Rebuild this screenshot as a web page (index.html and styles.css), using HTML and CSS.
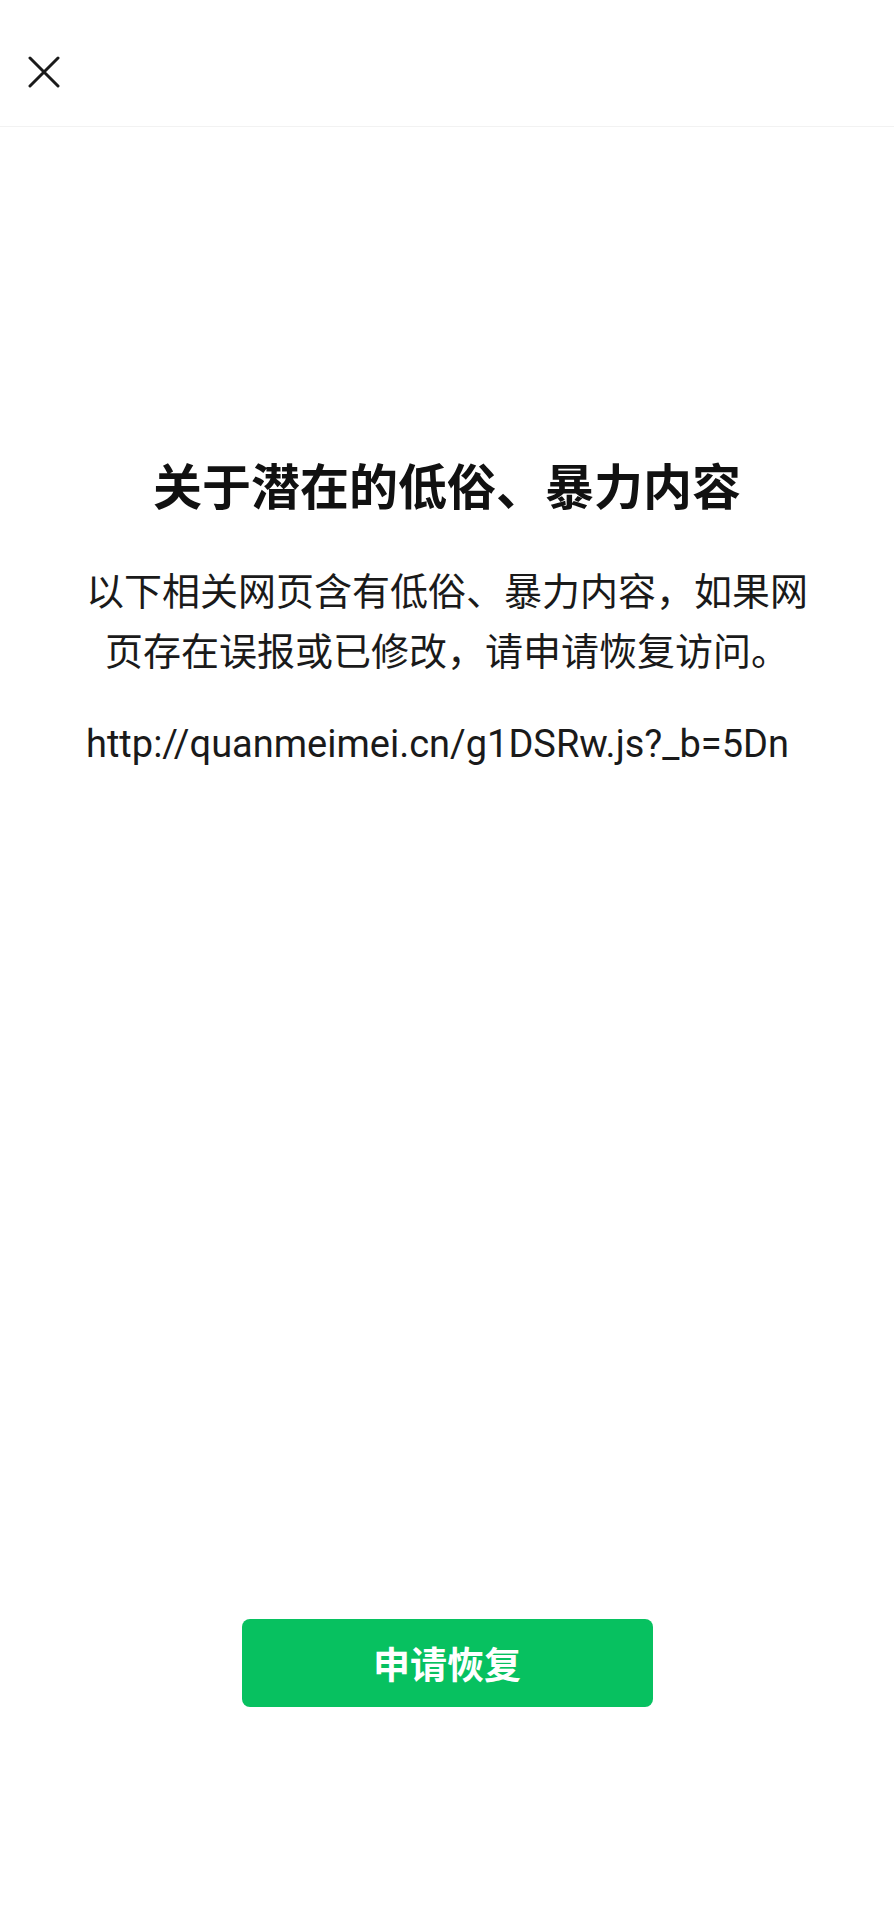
FILE: index.html
```html
<!DOCTYPE html>
<html lang="zh-CN">
<head>
  <meta charset="utf-8">
  <title>关于潜在的低俗、暴力内容</title>
  <link rel="stylesheet" href="styles.css">
</head>
<body>
<div class="page">
  <div class="top-bar">
    <button class="close-btn" aria-label="关闭">
      <svg width="32" height="32" viewBox="0 0 32 32">
        <path d="M2 2 L30 30 M30 2 L2 30" stroke="#1a1a1a" stroke-width="3" stroke-linecap="round" fill="none"/>
      </svg>
    </button>
  </div>

  <div class="content">
    <h1 class="warn-title">关于潜在的低俗、暴力内容</h1>
    <p class="warn-desc">以下相关网页含有低俗、暴力内容，如果网页存在误报或已修改，请申请恢复访问。</p>
    <p class="warn-url">http://quanmeimei.cn/g1DSRw.js?_b=5Dn</p>
  </div>

  <div class="bottom-area">
    <button class="restore-btn">申请恢复</button>
  </div>
</div>
</body>
</html>
```

FILE: styles.css
```css
body {
  margin: 0;
  background: #fff;
  font-family: Roboto, "Noto Sans CJK SC", sans-serif;
  color: #1a1a1a;
}
.page {
  min-height: 1920px;
  display: flex;
  flex-direction: column;
}
.top-bar {
  height: 70px;
  border-bottom: 1px solid #f2f2f2;
  padding: 56px 0 0 28px;
}
.close-btn {
  display: block;
  border: none;
  background: none;
  padding: 0;
  width: 32px;
  height: 32px;
}
.content {
  flex: 1;
  padding: 320px 86px 0;
}
.warn-title {
  margin: 0;
  font-family: "Noto Sans CJK SC", sans-serif;
  font-size: 49px;
  line-height: 73px;
  font-weight: 700;
  text-align: center;
  color: #111;
}
.warn-desc {
  margin: 39px 0 0;
  font-family: "Noto Sans CJK SC", sans-serif;
  font-size: 38px;
  line-height: 60px;
  text-align: center;
}
.warn-url {
  margin: 35px 0 0;
  font-family: Roboto, sans-serif;
  font-size: 38px;
  line-height: 60px;
  color: #1a1a1a;
}
.bottom-area {
  display: flex;
  justify-content: center;
  padding-bottom: 213px;
}
.restore-btn {
  width: 411px;
  height: 88px;
  border: none;
  border-radius: 8px;
  background-color: #07c160;
  color: #fff;
  font-family: "Noto Sans CJK SC", sans-serif;
  font-size: 37px;
  font-weight: 700;
  line-height: 80px;
}
```
